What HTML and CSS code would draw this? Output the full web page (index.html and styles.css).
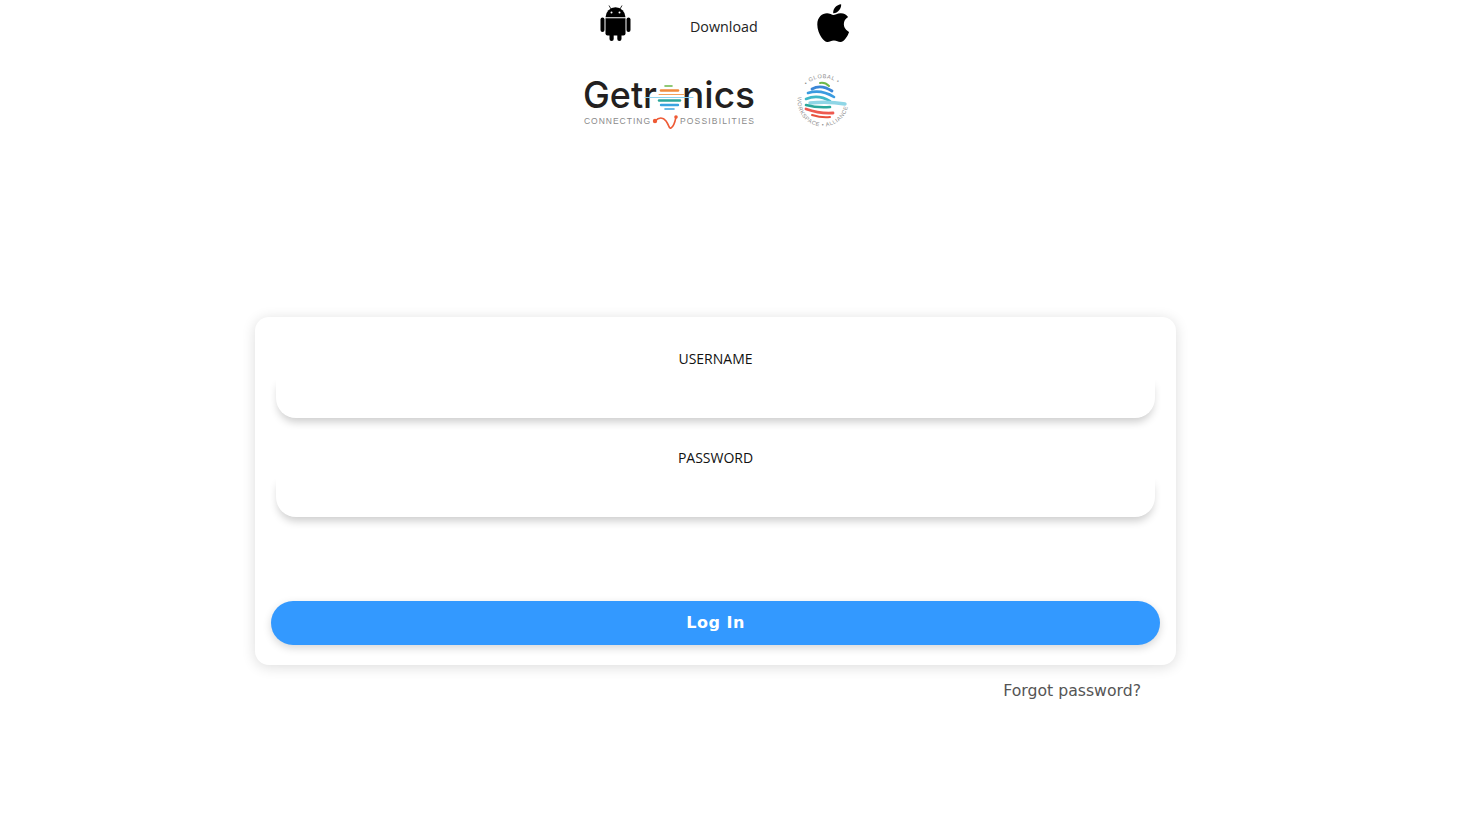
FILE: index.html
```html
<!DOCTYPE html>
<html lang="en">
<head>
  <meta charset="UTF-8">
  <title>Log In</title>
  <link rel="stylesheet" href="styles.css">
</head>
<body>

  <div class="downloads">
    <svg class="android" viewBox="0 0 30 36">
      <path d="M5 12.2a10 10 0 0 1 20 0z"/>
      <path d="M8.5 0.5l2 3.5M21.5 0.5l-2 3.5" stroke="#000" stroke-width="0.8" fill="none"/>
      <circle cx="11" cy="7.5" r="1" fill="#fff"/>
      <circle cx="19" cy="7.5" r="1" fill="#fff"/>
      <path d="M5 13.2h20v15.3a2 2 0 0 1-2 2h-16a2 2 0 0 1-2-2z"/>
      <rect x="0" y="12.5" width="4" height="14.5" rx="2"/>
      <rect x="26" y="12.5" width="4" height="14.5" rx="2"/>
      <rect x="9" y="27" width="4.2" height="9" rx="2.1"/>
      <rect x="16.8" y="27" width="4.2" height="9" rx="2.1"/>
    </svg>
    <span class="download-text">Download</span>
    <svg class="apple" viewBox="4 30 372 450">
      <path d="M318.7 268.7c-.2-36.7 16.4-64.4 50-84.8-18.8-26.9-47.2-41.7-84.7-44.6-35.5-2.8-74.3 20.7-88.5 20.7-15 0-49.4-19.7-76.4-19.7C63.3 141.2 4 184.8 4 273.5q0 39.3 14.4 81.2c12.8 36.7 59 126.7 107.2 125.2 25.2-.6 43-17.9 75.8-17.9 31.8 0 48.3 17.9 76.4 17.9 48.6-.7 90.4-82.5 102.6-119.3-65.2-30.7-61.7-90-61.7-91.9zm-56.6-164.2c27.3-32.4 24.8-61.9 24-72.5-24.1 1.4-52 16.4-67.9 34.9-17.5 19.8-27.8 44.3-25.6 71.9 26.1 2 49.9-11.4 69.5-34.3z"/>
    </svg>
  </div>

  <div class="logos">
    <svg class="getronics" viewBox="0 0 175 58">
      <text class="logo-word" x="0" y="36" textLength="74" lengthAdjust="spacingAndGlyphs">Getr</text>
      <text class="logo-word" x="99" y="36" textLength="73" lengthAdjust="spacingAndGlyphs">nics</text>
      <g fill="none" stroke-linecap="round">
        <path d="M82 14h7" stroke="#6cb84a" stroke-width="1.6"/>
        <path d="M78 18.5h17" stroke="#f08a3c" stroke-width="2.6"/>
        <path d="M76 22.5h25" stroke="#f4a25a" stroke-width="1"/>
        <path d="M62 25.500h48" stroke="#8fd3ee" stroke-width="1"/>
        <path d="M76 28.500h21" stroke="#2aa79b" stroke-width="2.4"/>
        <path d="M78 33h17" stroke="#3aa4e0" stroke-width="2.4"/>
        <path d="M82 37h9" stroke="#3aa4e0" stroke-width="1.6"/>
      </g>
      <text class="logo-tag" x="1" y="52" textLength="66">CONNECTING</text>
      <text class="logo-tag" x="97" y="52" textLength="74">POSSIBILITIES</text>
      <path d="M72 49C76 45 80 45 83 49S86 57 88 56 92 50 93 45" fill="none" stroke="#ee5a35" stroke-width="1.6"/>
      <circle cx="72" cy="49" r="2.2" fill="#ee5a35"/>
      <circle cx="93" cy="45" r="1.800" fill="#ee5a35"/>
    </svg>
    <svg class="alliance" viewBox="0 0 56 58">
      <defs>
        <path id="ring-top" d="M4 29a23 23 0 0 1 46 0"/>
        <path id="ring-bottom" d="M2.500 22a25.500 25.500 0 1 0 49 0"/>
      </defs>
      <g fill="none" stroke-linecap="round">
        <path d="M24 11q5-1 9 3" stroke="#6cb84a" stroke-width="2"/>
        <path d="M16 17q9-5 20 2" stroke="#3a86d6" stroke-width="2.800"/>
        <path d="M12 21q13-4 26 4" stroke="#3a9be0" stroke-width="2.600"/>
        <path d="M10 27q12-5 24 2" stroke="#3fb8c8" stroke-width="2.600"/>
        <path d="M14 31q18-2 35 1" stroke="#8fd6e6" stroke-width="3.400"/>
        <path d="M10 33q11 3 24 2" stroke="#2aa79b" stroke-width="2.600"/>
        <path d="M10 37q14 5 27 4" stroke="#ee5a50" stroke-width="2.800"/>
        <path d="M16 43q10 3 18 2" stroke="#e8503c" stroke-width="2"/>
      </g>
      <text class="alliance-text"><textPath href="#ring-top" startOffset="24%">• GLOBAL •</textPath></text>
      <text class="alliance-text"><textPath href="#ring-bottom" startOffset="3%">WORKSPACE • ALLIANCE</textPath></text>
    </svg>
  </div>

  <form class="card">
    <label class="field-label" for="username">USERNAME</label>
    <input class="field" id="username" type="text">
    <label class="field-label" for="password">PASSWORD</label>
    <input class="field" id="password" type="password">
    <button class="login-btn" type="button">Log In</button>
  </form>

  <div class="forgot-row">
    <a class="forgot" href="#">Forgot password?</a>
  </div>

</body>
</html>
```

FILE: styles.css
```css
body {
  margin: 0;
  background: #fff;
  font-family: "DejaVu Sans", sans-serif;
  color: #000;
}

.downloads {
  display: flex;
  align-items: flex-start;
  margin-left: 600px;
  height: 72px;
}

.android {
  width: 31px;
  height: 36px;
  margin-top: 5px;
}

.download-text {
  width: 68px;
  margin: 19px 59px 0 59px;
  font-family: "Open Sans", sans-serif;
  font-size: 14.300px;
  line-height: 16px;
  white-space: nowrap;
  color: #222;
}

.apple {
  width: 32px;
  height: 38px;
  margin-top: 4px;
}

.logos {
  display: flex;
  gap: 38px;
  margin-left: 583px;
  height: 245px;
}

.getronics {
  width: 175px;
  height: 58px;
}

.logo-word {
  font-family: "Inter", sans-serif;
  font-size: 37px;
  font-weight: 500;
  fill: #231f20;
}

.logo-tag {
  font-family: "Liberation Sans", sans-serif;
  font-size: 8.500px;
  fill: #8a8a8a;
}

.alliance {
  width: 56px;
  height: 58px;
}

.alliance-text {
  font-family: "Liberation Sans", sans-serif;
  font-size: 5.500px;
  letter-spacing: 0.6px;
  fill: #8a8a8a;
}

.card {
  display: flex;
  flex-direction: column;
  box-sizing: border-box;
  width: 921px;
  height: 348px;
  margin-left: 255px;
  padding: 34px 16px 20px;
  background: #fff;
  border-radius: 14px;
  box-shadow: 0 2px 14px rgba(0, 0, 0, 0.14);
}

.field-label {
  font-family: "Open Sans", sans-serif;
  font-size: 14px;
  line-height: 16px;
  text-align: center;
  color: #111;
}

.field {
  box-sizing: border-box;
  width: 879px;
  height: 40px;
  margin: 11px 0 32px 5px;
  padding: 0 20px;
  border: 0;
  outline: 0;
  background: #fff;
  border-radius: 0 0 20px 20px;
  box-shadow: 0 6px 8px -2px rgba(0, 0, 0, 0.2);
}

.login-btn {
  width: 889px;
  height: 44px;
  margin-top: 52px;
  padding: 0 0 2px;
  border: 0;
  border-radius: 22px;
  background: #3399ff;
  color: #fff;
  font-family: "DejaVu Sans", sans-serif;
  font-size: 16px;
  font-weight: bold;
  letter-spacing: 0.5px;
  box-shadow: 0 3px 8px rgba(0, 0, 0, 0.16);
}

.forgot-row {
  display: flex;
  justify-content: flex-end;
  width: 886px;
  margin: 16px 0 0 255px;
}

.forgot {
  font-size: 15.700px;
  line-height: 19px;
  color: #555;
  text-decoration: none;
}
```
